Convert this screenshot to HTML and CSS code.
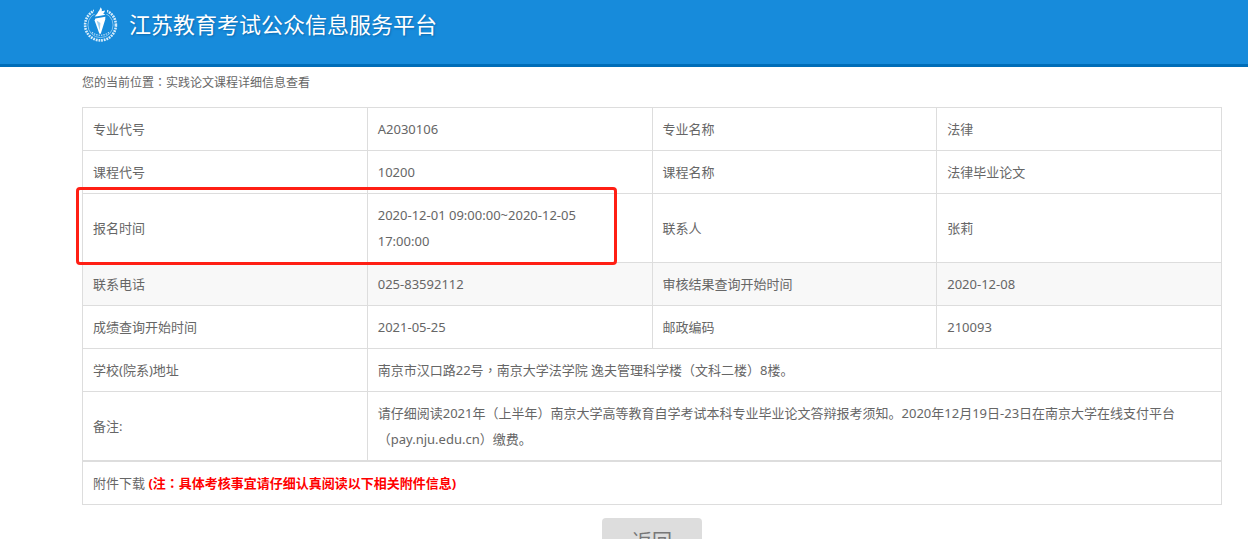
FILE: index.html
```html
<!DOCTYPE html>
<html lang="zh-CN">
<head>
<meta charset="utf-8">
<title>江苏教育考试公众信息服务平台</title>
<link rel="stylesheet" href="styles.css">
</head>
<body>
<header class="header">
  <svg class="logo" viewBox="0 0 36 36" aria-hidden="true">
    <circle class="logo-wreath-outer" cx="18.5" cy="19" r="15.4"/>
    <circle class="logo-wreath-inner" cx="18.5" cy="19" r="12.6"/>
    <path class="logo-dots" d="M10 26.5Q18.5 32 27 26.5"/>
    <path class="logo-gap" d="M12 0h13v8H12z"/>
    <path class="logo-torch" d="M13.4 12.6 23.4 10.8 23.2 13.4 18.8 27.8 17.4 27.8 12.6 14.4z"/>
    <path class="logo-torch" d="M12.8 10.6C14 8.6 15.6 8 16.4 5.6 17.4 4.6 18.2 2.6 18.6 1.2 20 2.8 20.2 4 19.6 5.2L23 4.6C22.8 6.2 21.8 7 21.2 7.6L23.4 8.8C20.4 9.2 16.4 10.4 12.8 10.6z"/>
    <path class="logo-shade" d="M14.6 14.6 17.8 24.6 18.4 17z"/>
  </svg>
  <h1 class="title">江苏教育考试公众信息服务平台</h1>
</header>
<main class="page">
  <p class="location">您的当前位置<span class="mid" lang="zh-TW">：</span>实践论文课程详细信息查看</p>
  <table class="info">
    <tbody>
      <tr><td>专业代号</td><td>A2030106</td><td>专业名称</td><td>法律</td></tr>
      <tr><td>课程代号</td><td>10200</td><td>课程名称</td><td>法律毕业论文</td></tr>
      <tr class="marked"><td>报名时间<span class="marker"></span></td><td>2020-12-01 09:00:00~2020-12-05<br>17:00:00</td><td>联系人</td><td>张莉</td></tr>
      <tr class="shaded"><td>联系电话</td><td>025-83592112</td><td>审核结果查询开始时间</td><td>2020-12-08</td></tr>
      <tr><td>成绩查询开始时间</td><td>2021-05-25</td><td>邮政编码</td><td>210093</td></tr>
      <tr><td>学校(院系)地址</td><td colspan="3">南京市汉口路22号<span class="mid" lang="zh-TW">，</span>南京大学法学院 逸夫管理科学楼<span class="mid" lang="zh-TW">（</span>文科二楼<span class="mid" lang="zh-TW">）</span>8楼。</td></tr>
      <tr><td>备注:</td><td colspan="3">请仔细阅读2021年<span class="mid" lang="zh-TW">（</span>上半年<span class="mid" lang="zh-TW">）</span>南京大学高等教育自学考试本科专业毕业论文答辩报考须知。2020年12月19日-23日在南京大学在线支付平台<span class="mid" lang="zh-TW">（</span>pay.nju.edu.cn<span class="mid" lang="zh-TW">）</span>缴费。</td></tr>
    </tbody>
  </table>
  <table class="info">
    <tbody>
      <tr><td>附件下载 <strong class="notice">(注<span class="mid" lang="zh-TW">：</span>具体考核事宜请仔细认真阅读以下相关附件信息)</strong></td></tr>
    </tbody>
  </table>
  <button class="back" type="button">返回</button>
</main>
</body>
</html>
```
FILE: styles.css
```css
body {
  margin: 0;
  background: #fff;
  color: #666;
  font: 13px/26px "Noto Sans", "Noto Sans CJK SC", sans-serif;
}

.header {
  display: flex;
  align-items: flex-start;
  gap: 11px;
  padding: 6px 26px 22px 82px;
  background: #178bdb;
  border-bottom: 3px solid #006db8;
}

.logo {
  width: 36px;
  height: 36px;
  fill: none;
}

.logo-wreath-outer {
  stroke: #d6ecfb;
  stroke-width: 2.6;
  stroke-dasharray: 1.8 0.9;
}

.logo-wreath-inner {
  stroke: #9fd0f2;
  stroke-width: 0.8;
}

.logo-dots {
  stroke: #d6ecfb;
  stroke-width: 1.2;
  stroke-dasharray: 1.2 1.2;
}

.logo-gap {
  fill: #178bdb;
}

.logo-torch {
  fill: #fff;
}

.logo-shade {
  fill: #9fd0f2;
}

.title {
  margin: 0;
  color: #fff;
  font-size: 22px;
  font-weight: 400;
  line-height: 36px;
  text-shadow: 1px 1px 2px #0b69ae;
}

.page {
  padding: 0 26px 40px 82px;
}

.location {
  margin: 0;
  padding: 3px 0 11px;
  font-size: 12px;
}

/* Punctuation centred in its full-width box */
.mid {
  font-family: "Noto Sans CJK TC", sans-serif;
  line-height: 1;
}

.info {
  width: 100%;
  table-layout: fixed;
  border-collapse: collapse;
}

.info td {
  padding: 8px 10px;
  border: 1px solid #ddd;
  vertical-align: middle;
}

.shaded {
  background: #f8f8f8;
}

.marked {
  position: relative;
}

.marker {
  position: absolute;
  top: -7px;
  bottom: -2px;
  left: -7px;
  width: 47%;
  border: 3px solid #ff1f14;
  border-radius: 4px;
  pointer-events: none;
}

.notice {
  color: #f00;
}

.back {
  display: block;
  width: 100px;
  height: 48px;
  margin: 13px auto 0;
  padding: 0;
  border: 0;
  border-radius: 4px;
  background: #ddd;
  color: #777;
  font: 20px/48px "Noto Sans", "Noto Sans CJK SC", sans-serif;
}
```
